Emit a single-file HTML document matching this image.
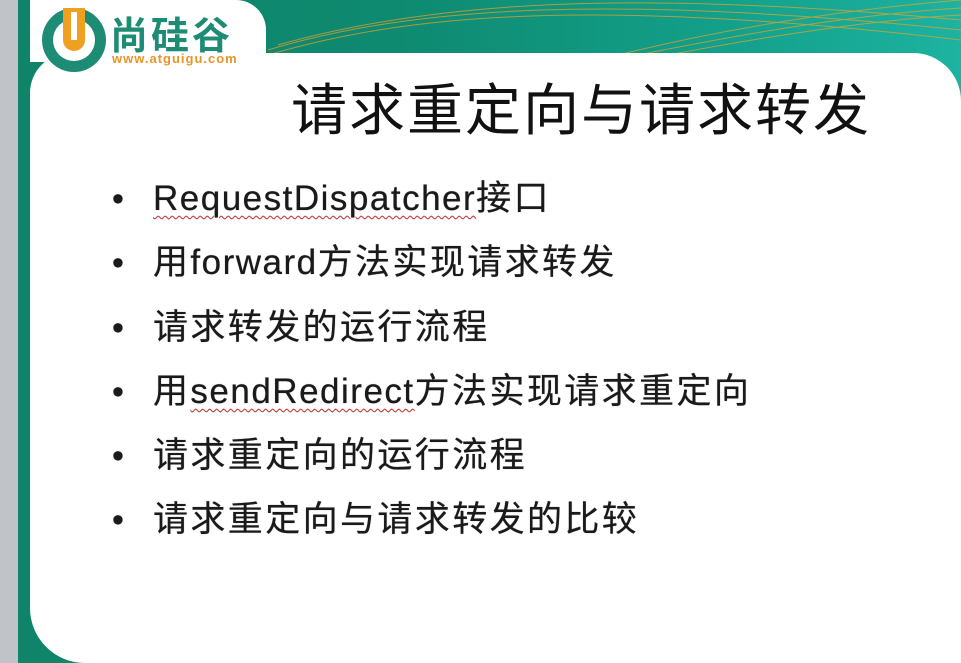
<!DOCTYPE html>
<html><head><meta charset="utf-8"><style>
html,body{margin:0;padding:0;overflow:hidden;width:961px;height:663px}
body{position:relative;background:#c0c4c8;font-family:"Liberation Sans","Noto Sans CJK SC",sans-serif}
.bg{position:absolute;left:18px;top:0;right:0;bottom:0;background:linear-gradient(90deg,#0f8468 0%,#0e8a70 40%,#13a08a 75%,#1cb3a0 100%)}
.lines{position:absolute;left:18px;top:0;width:943px;height:663px}
.panel{position:absolute;left:30px;top:53px;right:0;bottom:0;background:#fff;border-radius:40px 48px 0 55px}
.logo{position:absolute;left:30px;top:0;width:236px;height:62px;background:#fff;border-top-right-radius:30px}
.title{position:absolute;left:291px;top:66px;font-size:56px;color:#111;letter-spacing:2px;white-space:nowrap}
ul{position:absolute;left:112px;top:177px;margin:0;padding:0;list-style:none}
li{font-size:35px;height:64.3px;line-height:44px;color:#1a1a1a;letter-spacing:2.4px;white-space:nowrap;text-shadow:0 0 0.6px #1a1a1a}
li:before{content:"•";display:inline-block;width:41px;font-size:34px;vertical-align:top;letter-spacing:0}
.l{letter-spacing:1.5px}
.sq{text-decoration:underline wavy #e04848;text-decoration-thickness:1px;text-underline-offset:5px}
</style></head><body>
<div class="bg"></div>
<svg class="lines" viewBox="0 0 943 663" fill="none" stroke="#e8a32a" stroke-width="1" opacity="0.7">
<path d="M250 55 C400 10 600 0 943 40"/><path d="M250 50 C400 5 600 -5 943 30"/><path d="M260 45 C420 0 620 -10 943 20"/><path d="M600 55 C700 30 820 10 943 0"/><path d="M620 55 C720 35 830 15 943 8"/><path d="M650 55 C740 38 850 20 943 15"/><path d="M100 55 C110 30 115 10 120 0"/>
</svg>
<div class="panel"></div>
<div class="logo"></div>
<svg style="position:absolute;left:40px;top:4px" width="70" height="70" viewBox="0 0 70 70">
<circle cx="34" cy="36" r="32" fill="#1e8c74"/><circle cx="34" cy="36" r="21" fill="#fff"/>
<path d="M23 4 h22 v32 a11 11 0 0 1 -22 0z" fill="#f0a020"/><rect x="31" y="8" width="6" height="28" fill="#fff"/>
</svg>
<div style="position:absolute;left:110px;top:5px;font-size:38px;color:#1e8c74;font-weight:bold;letter-spacing:3px">尚硅谷</div>
<div style="position:absolute;left:112px;top:51px;font-size:13px;color:#e8952a;font-weight:bold;letter-spacing:1px">www.atguigu.com</div>
<div class="title">请求重定向与请求转发</div>
<ul>
<li><span class="sq l">RequestDispatcher</span>接口</li>
<li>用<span class="l">forward</span>方法实现请求转发</li>
<li>请求转发的运行流程</li>
<li>用<span class="sq l">sendRedirect</span>方法实现请求重定向</li>
<li>请求重定向的运行流程</li>
<li>请求重定向与请求转发的比较</li>
</ul>
</body></html>
